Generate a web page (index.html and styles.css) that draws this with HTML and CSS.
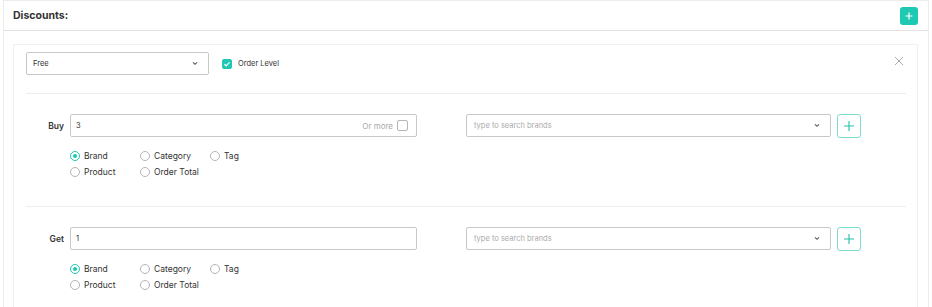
FILE: index.html
```html
<!DOCTYPE html>
<html>
<head>
<meta charset="utf-8">
<link rel="stylesheet" href="styles.css">
</head>
<body>
<div class="panel">
  <div class="header">
    <div class="title">Discounts:</div>
    <button class="add-btn"><svg width="10" height="10" viewBox="0 0 10 10"><path d="M5 1.5v7M1.5 5h7" stroke="#fff" stroke-width="1.2"/></svg></button>
  </div>
  <div class="card">
    <div class="top-row">
      <div class="select type-select"><span>Free</span><svg class="chev" width="6" height="5" viewBox="0 0 6 5"><path d="M1 1.3L3 3.3 5 1.3" stroke="#555" stroke-width="1.1" fill="none"/></svg></div>
      <label class="check-label"><span class="checkbox checked"><svg width="8" height="8" viewBox="0 0 8 8"><path d="M1.5 4.2L3.2 5.8 6.5 2.3" stroke="#fff" stroke-width="1.2" fill="none"/></svg></span>Order Level</label>
      <span class="close"><svg width="10" height="10" viewBox="0 0 10 10"><path d="M1 1l8 8M9 1L1 9" stroke="#aaa" stroke-width="1"/></svg></span>
    </div>
    <div class="section">
      <div class="left">
        <div class="field-row">
          <span class="field-label">Buy</span>
          <div class="input"><span>3</span><span class="or-more">Or more <span class="checkbox small"></span></span></div>
        </div>
        <div class="radios">
          <label class="radio"><span class="dot on"></span>Brand</label>
          <label class="radio"><span class="dot"></span>Category</label>
          <label class="radio"><span class="dot"></span>Tag</label>
          <label class="radio"><span class="dot"></span>Product</label>
          <label class="radio"><span class="dot"></span>Order Total</label>
        </div>
      </div>
      <div class="right">
        <div class="select search"><span class="ph">type to search brands</span><svg class="chev" width="6" height="5" viewBox="0 0 6 5"><path d="M1 1.3L3 3.3 5 1.3" stroke="#555" stroke-width="1.1" fill="none"/></svg></div>
        <button class="plus-outline"><svg width="12" height="12" viewBox="0 0 12 12"><path d="M6 1v10M1 6h10" stroke="#20c0ae" stroke-width="1.1"/></svg></button>
      </div>
    </div>
    <div class="section">
      <div class="left">
        <div class="field-row">
          <span class="field-label">Get</span>
          <div class="input"><span>1</span></div>
        </div>
        <div class="radios">
          <label class="radio"><span class="dot on"></span>Brand</label>
          <label class="radio"><span class="dot"></span>Category</label>
          <label class="radio"><span class="dot"></span>Tag</label>
          <label class="radio"><span class="dot"></span>Product</label>
          <label class="radio"><span class="dot"></span>Order Total</label>
        </div>
      </div>
      <div class="right">
        <div class="select search"><span class="ph">type to search brands</span><svg class="chev" width="6" height="5" viewBox="0 0 6 5"><path d="M1 1.3L3 3.3 5 1.3" stroke="#555" stroke-width="1.1" fill="none"/></svg></div>
        <button class="plus-outline"><svg width="12" height="12" viewBox="0 0 12 12"><path d="M6 1v10M1 6h10" stroke="#20c0ae" stroke-width="1.1"/></svg></button>
      </div>
    </div>
  </div>
</div>
</body>
</html>
```
FILE: styles.css
```css
* { box-sizing: border-box; }
html, body { margin: 0; padding: 0; background: #fff; }
body { font-family: Inter, "Noto Sans", sans-serif; color: #333; width: 932px; height: 307px; overflow: hidden; }
.panel { margin: 0 3px; border: 1px solid #ececec; border-bottom: none; height: 307px; overflow: hidden; }
.header { height: 30px; border-bottom: 1px solid #e2e2e2; display: flex; align-items: center; justify-content: space-between; padding: 0 10px 0 9px; }
.title { font-size: 10.5px; font-weight: 700; color: #333; }
.add-btn { width: 18px; height: 18px; border: none; border-radius: 3px; background: #1fc8b3; display: flex; align-items: center; justify-content: center; padding: 0; margin-top: 1px; }
.card { margin: 13px 10px 0 9px; border: 1px solid #f0f0f0; border-bottom: none; padding: 7px 11px 0 12px; height: 270px; overflow: hidden; }
.top-row { display: flex; align-items: center; height: 23px; }
.select { border: 1px solid #c8c8c8; border-radius: 2px; height: 23px; display: flex; align-items: center; justify-content: space-between; padding: 0 10px 0 6px; font-size: 7.5px; color: #333; background: #fff; }
.type-select { width: 183px; }
.chev { display: block; }
.check-label { display: flex; align-items: center; font-size: 7.5px; color: #333; margin-left: 13px; }
.checkbox { width: 10px; height: 10px; border-radius: 2px; border: 1px solid #aaa; display: inline-flex; align-items: center; justify-content: center; margin-right: 6px; }
.checkbox.checked { background: #1fc8b3; border-color: #1fc8b3; }
.checkbox.small { width: 11px; height: 11px; margin: 0 0 0 4px; border-color: #b5b5b5; }
.close { margin-left: auto; margin-right: 2px; display: flex; margin-top: -5px; }
.section { border-top: 1px solid #eeeeee; padding-top: 20px; height: 113px; display: flex; }
.top-row + .section { margin-top: 18px; }
.left { width: 391px; }
.field-row { display: flex; align-items: center; }
.field-label { width: 44px; text-align: right; padding-right: 6px; font-size: 8.5px; font-weight: 600; color: #333; }
.input { flex: 1; height: 23px; border: 1px solid #c8c8c8; border-radius: 2px; display: flex; align-items: center; justify-content: space-between; padding: 0 8px 0 5px; font-size: 7.5px; color: #333; }
.or-more { display: flex; align-items: center; color: #aaa; font-size: 8px; }
.radios { display: grid; grid-template-columns: 70px 70px 70px; margin: 11px 0 0 44px; }
.radio { display: flex; align-items: center; height: 16px; font-size: 8.5px; color: #333; }
.dot { width: 10px; height: 10px; border-radius: 50%; border: 1px solid #b5b5b5; margin-right: 4px; position: relative; }
.dot.on { border-color: #1fc8b3; }
.dot.on::after { content: ""; position: absolute; left: 2px; top: 2px; width: 4px; height: 4px; border-radius: 50%; background: #1fc8b3; }
.right { display: flex; align-items: flex-start; margin-left: 49px; }
.search { width: 365px; padding-left: 7px; }
.ph { color: #aaa; font-size: 7.5px; }
.plus-outline { width: 24px; height: 24px; margin-left: 6px; border: 1px solid #7ddccf; border-radius: 3px; background: #fff; display: flex; align-items: center; justify-content: center; padding: 0; }
```
